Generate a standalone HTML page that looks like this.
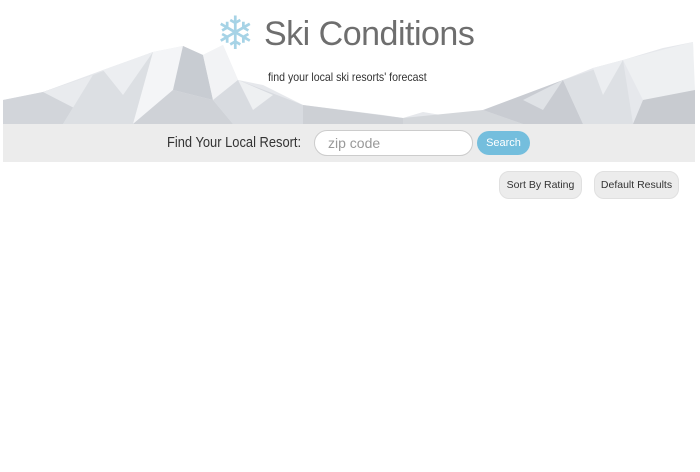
<!DOCTYPE html>
<html><head><style>
body{margin:0;width:700px;height:472px;background:#fff;font-family:"Liberation Sans",sans-serif;position:relative;overflow:hidden}
.hdr{position:absolute;left:3px;top:0;width:692px;height:124px}
.title{position:absolute;left:264px;top:15px;font-size:34px;color:#6e6e6e;letter-spacing:-0.5px;white-space:nowrap}
.flake{position:absolute;left:216px;top:8px;font-size:46px;color:#a6d3e6;line-height:50px}
.sub{position:absolute;left:268px;top:70px;font-size:12px;color:#333;white-space:nowrap;transform:scaleX(0.88);transform-origin:left}
.bar{position:absolute;left:3px;top:124px;width:692px;height:38px;background:#ececec}
.lbl{position:absolute;left:167px;top:134px;font-size:15px;color:#333;white-space:nowrap;transform:scaleX(0.86);transform-origin:left}
.inp{position:absolute;left:314px;top:130px;border:1px solid #ccc;border-radius:13px;background:#fff;box-sizing:border-box;width:159px;height:26px;font-size:14px;color:#999;padding:4px 0 0 13px}
.btn{position:absolute;left:477px;top:131px;width:53px;height:24px;border-radius:12px;background:#74bedd;color:#fff;font-size:11px;text-align:center;line-height:24px}
.b2{position:absolute;top:171px;height:28px;border-radius:10px;background:#ececec;border:1px solid #e0e0e0;box-sizing:border-box;font-size:10.5px;color:#333;text-align:center;line-height:27px}
</style></head><body>
<svg class="hdr" viewBox="0 0 692 124" width="692" height="124">
<g stroke="none">
<polygon points="0,124 0,100 40,92 100,70 150,52 180,46 200,55 220,45 235,80 260,85 300,105 340,110 380,115 400,118 420,112 450,117 480,110 520,100 560,80 590,68 620,60 660,48 690,42 692,124" fill="#e6e8ec"/>
<polygon points="0,124 0,100 40,92 90,75 60,124" fill="#d2d5da"/>
<polygon points="40,92 90,75 75,110" fill="#e9ebee"/>
<polygon points="90,75 150,52 130,124 60,124" fill="#dcdfe3"/>
<polygon points="100,70 150,52 120,95" fill="#eceef1"/>
<polygon points="150,52 180,46 170,90 130,124" fill="#f4f5f7"/>
<polygon points="180,46 200,55 210,100 170,90" fill="#c8ccd2"/>
<polygon points="200,55 220,45 235,80 210,100" fill="#f2f3f5"/>
<polygon points="170,90 210,100 230,124 130,124" fill="#cfd2d7"/>
<polygon points="235,80 300,105 300,124 230,124 210,100" fill="#d8dbe0"/>
<polygon points="235,80 270,95 250,110" fill="#eef0f2"/>
<polygon points="300,105 400,118 400,124 300,124" fill="#cdd0d5"/>
<polygon points="400,118 480,110 520,124 400,124" fill="#d4d7db"/>
<polygon points="480,110 560,80 580,124 520,124" fill="#c9ccd2"/>
<polygon points="520,100 560,80 540,110" fill="#dfe2e6"/>
<polygon points="560,80 620,60 630,124 580,124" fill="#dde0e4"/>
<polygon points="590,68 620,60 600,95" fill="#eceef1"/>
<polygon points="620,60 690,42 692,90 640,100" fill="#eef0f2"/>
<polygon points="640,100 692,90 692,124 630,124" fill="#c8cbd0"/>
</g>
</svg>
<div class="flake">❄</div>
<div class="title">Ski Conditions</div>
<div class="sub">find your local ski resorts' forecast</div>
<div class="bar"></div>
<div class="lbl">Find Your Local Resort:</div>
<div class="inp">zip code</div>
<div class="btn">Search</div>
<div class="b2" style="left:499px;width:83px">Sort By Rating</div>
<div class="b2" style="left:594px;width:85px">Default Results</div>
</body></html>
